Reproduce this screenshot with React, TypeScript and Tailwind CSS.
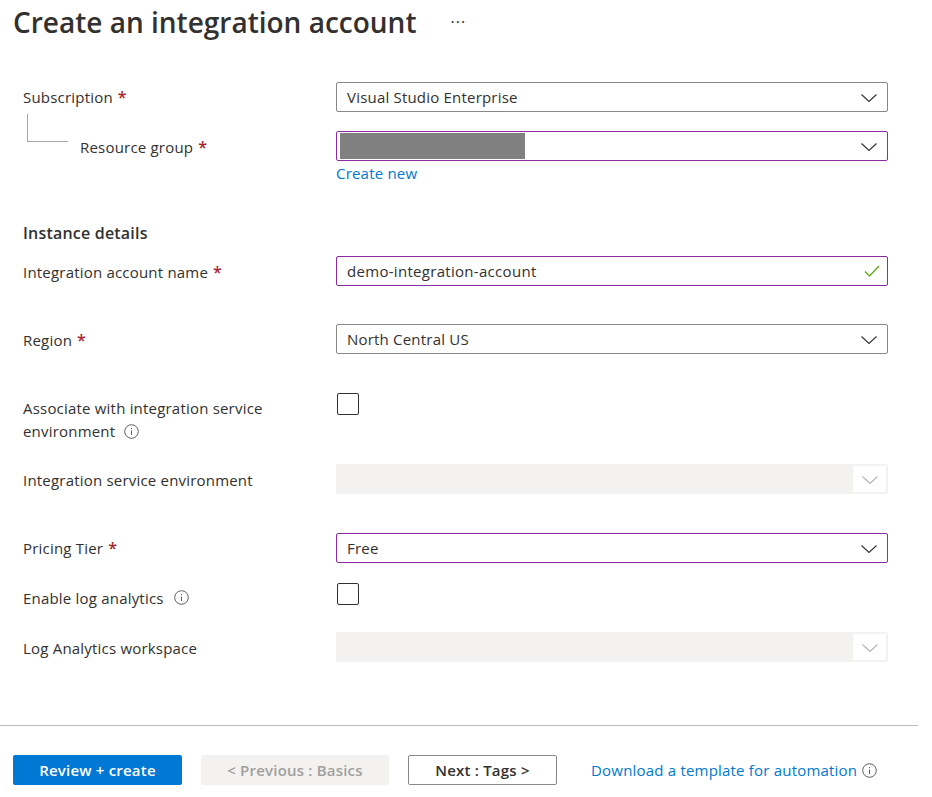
import React from "react";

const Chevron = ({ disabled }: { disabled?: boolean }) => (
  <svg width="16" height="8" viewBox="0 0 16 8" fill="none" className="shrink-0 mt-[2px]">
    <path d="M0.5 0.5 L8 7.5 L15.5 0.5" stroke={disabled ? "#b5b3b1" : "#323130"} strokeWidth="1.1" />
  </svg>
);

const Info = ({ size = 15 }: { size?: number }) => (
  <svg width={size} height={size} viewBox="0 0 15 15" fill="none" className="shrink-0">
    <circle cx="7.5" cy="7.5" r="6.8" stroke="#605e5c" strokeWidth="1" />
    <path d="M7.5 6.6 V11" stroke="#605e5c" strokeWidth="1" />
    <rect x="7" y="4" width="1" height="1.2" fill="#605e5c" />
  </svg>
);

const Star = () => <span className="text-[#a4262c] ml-[5px] font-semibold text-[16px]">*</span>;

const Select = ({ value, purple, masked }: { value?: string; purple?: boolean; masked?: boolean }) => (
  <div
    className={`h-[30px] w-[552px] rounded-[2px] border flex items-center justify-between pr-[10px] ${
      purple ? "border-[#8a2da5]" : "border-[#8a8886]"
    } ${masked ? "pl-[3px]" : "pl-[10px]"}`}
  >
    {masked ? <div className="w-[185px] h-[26px] bg-[#808080]" /> : <span className="text-[#323130]">{value}</span>}
    <Chevron />
  </div>
);

const DisabledSelect = () => (
  <div className="h-[30px] w-[552px] rounded-[2px] bg-[#f3f2f1] flex justify-end p-[2px]">
    <div className="w-[33px] h-[26px] bg-white flex items-center justify-center">
      <Chevron disabled />
    </div>
  </div>
);

const Checkbox = () => <div className="w-[22px] h-[22px] rounded-[2px] border border-[#323130] ml-px" />;

export default function App() {
  return (
    <div
      className="w-[932px] h-[797px] bg-white overflow-hidden text-[#323130] text-[15px] leading-[20px] tracking-[0.2px]"
      style={{ fontFamily: '"Open Sans", "Noto Sans", sans-serif' }}
    >
      <header className="pl-[13px] h-[44px] flex items-center">
        <h1 className="text-[28px] leading-[44px] font-semibold tracking-normal text-[#323130]">Create an integration account</h1>
        <span className="ml-[34px] text-[16px] leading-none tracking-[1px]">···</span>
      </header>

      <main className="pl-[23px] pt-[38px] grid grid-cols-[313px_552px]">
        <div className="h-[30px] flex items-center">
          Subscription
          <Star />
        </div>
        <Select value="Visual Studio Enterprise" />

        <div className="relative mt-[19px] h-[30px] pt-[1px] pl-[57px] flex items-center">
          <div className="absolute left-[4px] -top-[17px] w-[41px] h-[28px] border-l border-b border-[#a8a6a4]" />
          Resource group
          <Star />
        </div>
        <div className="mt-[19px]">
          <Select masked purple />
          <a className="block text-[#0078d4] mt-[2px]">Create new</a>
        </div>

        <div className="col-span-2 mt-[38px] h-[24px] flex items-center font-semibold text-[16px]">Instance details</div>

        <div className="mt-[11px] h-[30px] pt-[2px] flex items-center">
          Integration account name
          <Star />
        </div>
        <div className="mt-[11px] w-[552px] h-[30px] rounded-[2px] border border-[#8a2da5] flex items-center justify-between pl-[10px] pr-[7px]">
          <span className="tracking-[0.3px]">demo-integration-account</span>
          <svg width="16" height="12" viewBox="0 0 16 12" fill="none">
            <path d="M1 6.5 L5.5 11 L15 1" stroke="#57a300" strokeWidth="1.2" />
          </svg>
        </div>

        <div className="mt-[38px] h-[30px] pt-[2px] flex items-center">
          Region
          <Star />
        </div>
        <div className="mt-[38px]">
          <Select value="North Central US" />
        </div>

        <div className="mt-[43px] leading-[23px] w-[260px]">
          Associate with integration service
          <div className="flex items-center gap-[9px]">
            environment <Info />
          </div>
        </div>
        <div className="mt-[39px]">
          <Checkbox />
        </div>

        <div className="mt-[21px] h-[30px] pt-[2px] flex items-center">Integration service environment</div>
        <div className="mt-[21px]">
          <DisabledSelect />
        </div>

        <div className="mt-[39px] h-[30px] flex items-center">
          Pricing Tier
          <Star />
        </div>
        <div className="mt-[39px]">
          <Select purple value="Free" />
        </div>

        <div className="mt-[19px] h-[30px] pt-[1px] flex items-center gap-[10px]">
          Enable log analytics <Info />
        </div>
        <div className="mt-[19px] pt-[1px]">
          <Checkbox />
        </div>

        <div className="mt-[20px] h-[30px] pt-[1px] flex items-center">Log Analytics workspace</div>
        <div className="mt-[20px]">
          <DisabledSelect />
        </div>
      </main>

      <div className="mt-[63px] w-[918px] border-t border-[#bdbbb9]" />

      <footer className="mt-[29px] pl-[13px] flex items-center">
        <button className="w-[169px] h-[30px] rounded-[2px] bg-[#0078d4] text-white font-semibold">Review + create</button>
        <button className="ml-[19px] w-[188px] h-[30px] rounded-[2px] bg-[#f3f2f1] text-[#a19f9d] font-semibold">&lt; Previous : Basics</button>
        <button className="ml-[19px] w-[149px] h-[30px] rounded-[2px] border border-[#8a8886] text-[#323130] font-semibold">Next : Tags &gt;</button>
        <a className="ml-[34px] text-[#0078d4]">Download a template for automation</a>
        <span className="ml-[5px]"><Info /></span>
      </footer>
    </div>
  );
}
